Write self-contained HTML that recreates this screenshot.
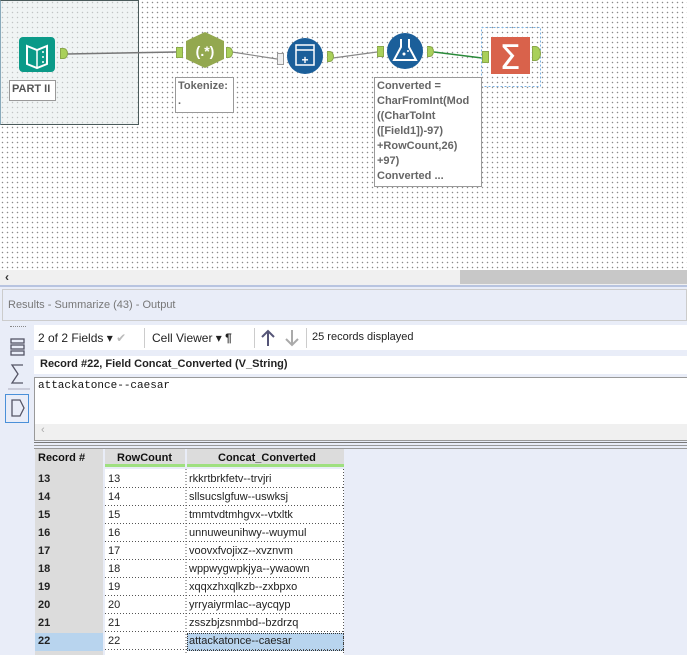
<!DOCTYPE html>
<html><head><style>
*{margin:0;padding:0;box-sizing:border-box}
body{width:687px;height:655px;overflow:hidden;position:relative;font-family:"Liberation Sans",sans-serif;background:#e9edf8}
.a{position:absolute}
#canvas{left:0;top:0;width:687px;height:270px;background-color:#fff;background-image:radial-gradient(circle,#8a8a8a 0.6px,transparent 0.9px);background-size:5px 5px}
.note{position:absolute;background:#fff;border:1px solid #999;font-size:11px;font-weight:bold;color:#666;line-height:15px;padding:1px 2px}
</style></head><body>
<div id="canvas" class="a">
<div class="a" style="left:0;top:0;width:139px;height:125px;background:rgba(230,236,236,0.6);border:1px solid #4a5a5a;border-left:1px solid #8ab"></div>
<svg class="a" style="left:0;top:0" width="687" height="270">
<line x1="67" y1="54" x2="176" y2="52" stroke="#777" stroke-width="1.5"/>
<line x1="232" y1="52" x2="277" y2="59" stroke="#888" stroke-width="1.2"/>
<line x1="333" y1="58" x2="377" y2="52" stroke="#888" stroke-width="1.2"/>
<line x1="434" y1="52" x2="482" y2="58" stroke="#2a8a3a" stroke-width="1.5"/>
<rect x="19" y="37" width="36" height="35" rx="4" fill="#0b9a88"/>
<path d="M27 46 L37 50 L47 46 L47 64 L37 68 L27 64Z" fill="none" stroke="#fff" stroke-width="2"/>
<line x1="37" y1="50" x2="37" y2="67" stroke="#fff" stroke-width="1.5"/>
<circle cx="43" cy="52" r="1" fill="#fff"/><circle cx="43" cy="57" r="1" fill="#fff"/><circle cx="43" cy="62" r="1" fill="#fff"/>
<polygon points="205,32 224,41 224,59 205,68 186,59 186,41" fill="#93a84f"/>
<text x="205" y="56" font-size="14" font-weight="bold" fill="#fff" text-anchor="middle" font-family="Liberation Sans">(.*)</text>
<rect x="277.5" y="53.5" width="6" height="11" fill="#f0f0f0" stroke="#999"/>
<circle cx="305" cy="56" r="18" fill="#1b5f9a"/>
<rect x="296" y="45" width="18" height="20" fill="none" stroke="#fff" stroke-width="1.5"/>
<line x1="296" y1="50" x2="314" y2="50" stroke="#fff" stroke-width="1.5"/>
<text x="305" y="64" font-size="12" font-weight="bold" fill="#fff" text-anchor="middle">+</text>
<circle cx="405" cy="51" r="18" fill="#1b5f9a"/>
<path d="M401 39 L401 47 L394 60 L416 60 L409 47 L409 39" fill="none" stroke="#fff" stroke-width="2"/>
<circle cx="404" cy="54" r="1.5" fill="#fff"/><circle cx="408" cy="51" r="1" fill="#fff"/>
<rect x="491" y="37" width="39" height="37" fill="#d9624b"/>
<text x="510" y="69" font-size="34" fill="#fff" text-anchor="middle" font-family="DejaVu Sans">Σ</text>
<rect x="481.5" y="27.5" width="59" height="59" fill="none" stroke="#7ab0e0" stroke-dasharray="2,2"/>
<g fill="#a9d05a" stroke="#8aa84a">
<path d="M60.5 48.5 h3 a4 5 0 0 1 0 10 h-3z"/>
<rect x="176.5" y="47.5" width="6" height="10"/>
<path d="M226.5 47.5 h2 a4 5 0 0 1 0 10 h-2z"/>
<path d="M327.5 51.5 h2 a4 5 0 0 1 0 10 h-2z"/>
<rect x="377.5" y="46.5" width="6" height="10"/>
<path d="M427.5 46.5 h2 a4 5 0 0 1 0 10 h-2z"/>
<rect x="482.5" y="51.5" width="6" height="11"/>
<path d="M532.5 46.5 h3 a5 7 0 0 1 0 14 h-3z"/>
</g>
</svg>
<div class="note" style="left:9px;top:80px;width:47px;height:21px;font-size:11px;color:#555">PART II</div>
<div class="note" style="left:175px;top:77px;width:59px;height:36px">Tokenize:<br>.</div>
<div class="note" style="left:374px;top:77px;width:108px;height:110px;line-height:15px">Converted =<br>CharFromInt(Mod<br>((CharToInt<br>([Field1])-97)<br>+RowCount,26)<br>+97)<br>Converted ...</div>
</div>
<div class="a" style="left:0;top:270px;width:687px;height:16px;background:#f0f0f0"></div>
<div class="a" style="left:460px;top:270px;width:227px;height:14px;background:#c8c8c8"></div>
<div class="a" style="left:5px;top:270px;font-size:12px;color:#333;font-weight:bold">‹</div>
<div class="a" style="left:0;top:285px;width:687px;height:2px;background:#b8c4e0"></div>
<div class="a" style="left:2px;top:289px;width:685px;height:32px;border:1px solid #ccc;background:#e9edf8"></div>
<div class="a" style="left:8px;top:299px;font-size:11px;color:#777">Results - Summarize (43) - Output</div>
<div class="a" style="left:10px;top:326px;width:16px;border-top:1px dotted #888"></div>
<svg class="a" style="left:4px;top:335px" width="30" height="90">
<rect x="7" y="4" width="13" height="4" fill="none" stroke="#556" stroke-width="1.3"/>
<rect x="7" y="10" width="13" height="4" fill="none" stroke="#556" stroke-width="1.3"/>
<rect x="7" y="16" width="13" height="4" fill="none" stroke="#556" stroke-width="1.3"/>
<path d="M19 30 L8 30 L14 39 L8 48 L19 48" fill="none" stroke="#556" stroke-width="1.3"/>
<line x1="4" y1="54" x2="26" y2="54" stroke="#aab" />
<rect x="1.5" y="59.5" width="23" height="28" fill="none" stroke="#4a90d9"/>
<path d="M8 65 L16 65 L20 73 L16 81 L8 81Z" fill="none" stroke="#556" stroke-width="1.3"/>
</svg>
<div class="a" style="left:34px;top:325px;width:653px;height:25px;background:#fff;font-size:12px;color:#222">
<span class="a" style="left:4px;top:6px">2 of 2 Fields ▾ <span style="color:#bbb">✔</span></span>
<span class="a" style="left:110px;top:3px;height:20px;border-left:1px solid #ccc"></span>
<span class="a" style="left:118px;top:6px">Cell Viewer ▾ <b>¶</b></span>
<span class="a" style="left:220px;top:3px;height:20px;border-left:1px solid #ccc"></span>
<svg class="a" style="left:226px;top:3px" width="44" height="20"><path d="M8 18 V3 M2 9 L8 3 L14 9" fill="none" stroke="#557" stroke-width="2"/><path d="M32 2 V17 M26 11 L32 17 L38 11" fill="none" stroke="#aaa" stroke-width="2"/></svg>
<span class="a" style="left:272px;top:3px;height:20px;border-left:1px solid #ccc"></span>
<span class="a" style="left:278px;top:6px;font-size:11px">25 records displayed</span>
</div>
<div class="a" style="left:34px;top:356px;width:653px;height:18px;background:#fff;font-size:11px;font-weight:bold;color:#222;padding:2px 6px">Record #22, Field Concat_Converted (V_String)</div>
<div class="a" style="left:34px;top:377px;width:653px;height:64px;background:#fff;border:1px solid #999;border-right:none"></div>
<div class="a" style="left:38px;top:380px;font-family:'Liberation Mono',monospace;font-size:11px;color:#111">attackatonce--caesar</div>
<div class="a" style="left:35px;top:424px;width:652px;height:16px;background:#f0f0f0;font-size:11px;color:#aaa;padding-left:6px">‹</div>
<div class="a" style="left:34px;top:442px;width:653px;height:1px;background:#777"></div>
<div class="a" style="left:34px;top:445px;width:653px;height:1px;background:#999"></div>
<div class="a" style="left:34px;top:448px;width:653px;height:1px;background:#999"></div>
<div class="a" style="left:35px;top:449px;width:68px;height:206px;background:#dcdcdc"></div>
<div class="a" style="left:105px;top:449px;width:80px;height:18px;background:#dcdcdc;border-bottom:3px solid #9fe080"></div>
<div class="a" style="left:187px;top:449px;width:157px;height:18px;background:#dcdcdc;border-bottom:3px solid #9fe080"></div>
<div class="a" style="left:105px;top:469px;width:239px;height:186px;background:#fff"></div>
<div class="a" style="left:35px;top:633px;width:68px;height:18px;background:#b8d4ee"></div>
<div class="a" style="left:187px;top:633px;width:157px;height:18px;background:#b8d4ee;border:1px dotted #333"></div>
<div class="a" style="left:38px;top:452px;font-size:11px;font-weight:bold;color:#111">Record #</div>
<div class="a" style="left:117px;top:452px;font-size:11px;font-weight:bold;color:#111">RowCount</div>
<div class="a" style="left:218px;top:452px;font-size:11px;font-weight:bold;color:#111">Concat_Converted</div>
<div class="a" style="left:0;top:470px;font-size:11px;color:#222;line-height:18px">
<div style="position:absolute;left:38px;font-weight:bold;width:40px">13<br>14<br>15<br>16<br>17<br>18<br>19<br>20<br>21<br>22</div>
<div style="position:absolute;left:108px;width:40px">13<br>14<br>15<br>16<br>17<br>18<br>19<br>20<br>21<br>22</div>
<div style="position:absolute;left:189px;width:160px">rkkrtbrkfetv--trvjri<br>sllsucslgfuw--uswksj<br>tmmtvdtmhgvx--vtxltk<br>unnuweunihwy--wuymul<br>voovxfvojixz--xvznvm<br>wppwygwpkjya--ywaown<br>xqqxzhxqlkzb--zxbpxo<br>yrryaiyrmlac--aycqyp<br>zsszbjzsnmbd--bzdrzq<br>attackatonce--caesar</div>
</div>
<svg class="a" style="left:105px;top:469px" width="240" height="186">
<g stroke="#555" stroke-dasharray="1,2">
<line x1="81" y1="0" x2="81" y2="186"/><line x1="238.5" y1="0" x2="238.5" y2="186"/>
<line x1="0" y1="18.5" x2="239" y2="18.5"/><line x1="0" y1="36.5" x2="239" y2="36.5"/><line x1="0" y1="54.5" x2="239" y2="54.5"/><line x1="0" y1="72.5" x2="239" y2="72.5"/><line x1="0" y1="90.5" x2="239" y2="90.5"/><line x1="0" y1="108.5" x2="239" y2="108.5"/><line x1="0" y1="126.5" x2="239" y2="126.5"/><line x1="0" y1="144.5" x2="239" y2="144.5"/><line x1="0" y1="162.5" x2="239" y2="162.5"/><line x1="0" y1="180.5" x2="239" y2="180.5"/>
</g></svg>
</body></html>
